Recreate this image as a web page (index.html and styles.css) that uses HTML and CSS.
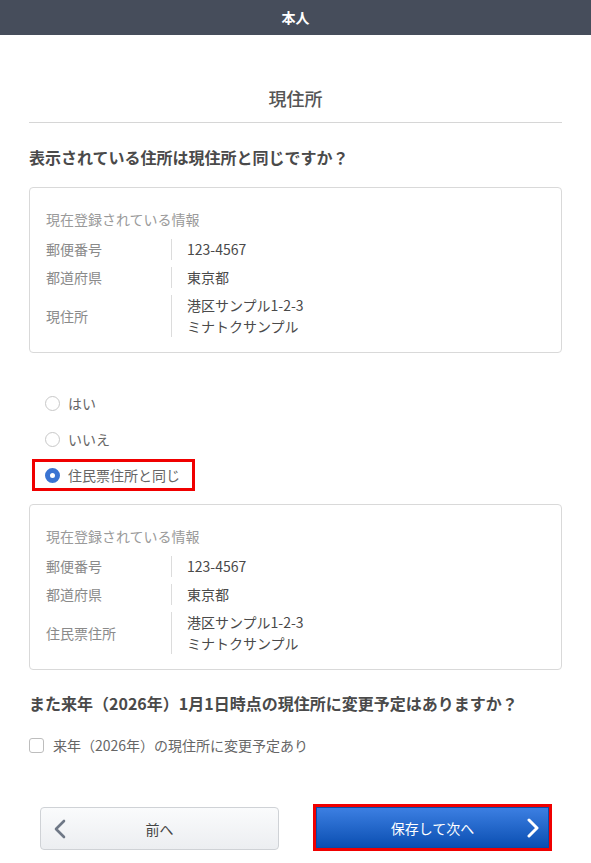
FILE: index.html
```html
<!DOCTYPE html>
<html lang="ja">
<head>
<meta charset="utf-8">
<title>現住所</title>
<link rel="stylesheet" href="styles.css">
</head>
<body>
<header class="topbar">本人</header>
<main class="main">
  <h1 class="page-title">現住所</h1>
  <h2 class="question q1">表示されている住所は現住所と同じですか？</h2>

  <section class="card">
    <div class="card-head">現在登録されている情報</div>
    <div class="row"><div class="lbl">郵便番号</div><div class="val">123-4567</div></div>
    <div class="row"><div class="lbl">都道府県</div><div class="val">東京都</div></div>
    <div class="row"><div class="lbl">現住所</div><div class="val">港区サンプル1-2-3<br>ミナトクサンプル</div></div>
  </section>

  <div class="options">
    <label class="opt"><span class="radio"></span><span class="opt-text">はい</span></label>
    <label class="opt"><span class="radio"></span><span class="opt-text">いいえ</span></label>
    <label class="opt opt-hl"><span class="radio radio-on"></span><span class="opt-text">住民票住所と同じ</span></label>
  </div>

  <section class="card card2">
    <div class="card-head">現在登録されている情報</div>
    <div class="row"><div class="lbl">郵便番号</div><div class="val">123-4567</div></div>
    <div class="row"><div class="lbl">都道府県</div><div class="val">東京都</div></div>
    <div class="row"><div class="lbl">住民票住所</div><div class="val">港区サンプル1-2-3<br>ミナトクサンプル</div></div>
  </section>

  <h2 class="question q2">また来年（2026年）1月1日時点の現住所に変更予定はありますか？</h2>
  <label class="check"><span class="box"></span><span>来年（2026年）の現住所に変更予定あり</span></label>

  <div class="buttons">
    <button class="btn btn-back">
      <svg class="chev chev-l" width="14" height="20" viewBox="0 0 14 20"><path d="M11 2 L3 10 L11 18" fill="none" stroke="#6f7886" stroke-width="2.6" stroke-linecap="round" stroke-linejoin="round"/></svg>
      <span>前へ</span>
    </button>
    <div class="next-wrap">
      <button class="btn btn-next">
        <span>保存して次へ</span>
        <svg class="chev chev-r" width="14" height="20" viewBox="0 0 14 20"><path d="M3 2 L11 10 L3 18" fill="none" stroke="#ffffff" stroke-width="3" stroke-linecap="round" stroke-linejoin="round"/></svg>
      </button>
    </div>
  </div>
</main>
</body>
</html>
```
FILE: styles.css
```css
* { box-sizing: border-box; }
html, body { margin: 0; padding: 0; background: #fff; }
body {
  font-family: "Noto Sans CJK JP", "Noto Sans", sans-serif;
  font-size: 14px;
  color: #444;
  width: 591px;
}
.topbar {
  height: 35px;
  background: #464d5b;
  color: #fff;
  font-weight: 700;
  font-size: 14px;
  line-height: 35px;
  text-align: center;
}
.main {
  padding: 51px 29px 0 29px;
}
.page-title {
  margin: 0;
  font-size: 18px;
  line-height: 24px;
  font-weight: 500;
  color: #555;
  text-align: center;
  padding-bottom: 12px;
  border-bottom: 1px solid #d6d6d6;
}
.question {
  margin: 0;
  font-size: 16px;
  line-height: 22px;
  font-weight: 700;
  color: #4a4a4a;
}
.q1 { margin-top: 23px; }
.q2 { margin-top: 22px; }
.card {
  margin-top: 19px;
  border: 1px solid #d9d9d9;
  border-radius: 4px;
  padding: 20px 16px 15px 16px;
}
.card2 { margin-top: 13px; }
.card-head {
  color: #9a9a9a;
  line-height: 22px;
  margin-bottom: 9px;
}
.row {
  display: grid;
  grid-template-columns: 125px 1fr;
  line-height: 21px;
}
.row + .row { margin-top: 7px; }
.lbl {
  color: #8a8a8a;
  display: flex;
  align-items: center;
}
.val {
  border-left: 1px solid #dcdcdc;
  padding-left: 15px;
  color: #4a4a4a;
}
.options {
  margin-top: 34px;
  display: flex;
  flex-direction: column;
  align-items: flex-start;
  gap: 4px;
  margin-left: 3px;
}
.opt {
  display: inline-flex;
  align-items: center;
  height: 32px;
  border: 3px solid transparent;
  padding: 0 12px 0 10px;
  gap: 8px;
  color: #666;
  font-size: 14px;
}
.opt-hl { border-color: #f00000; }
.radio {
  width: 15px;
  height: 15px;
  border-radius: 50%;
  border: 1px solid #c8c8c8;
  background: #fff;
  flex: none;
}
.radio-on {
  border: 5px solid #3a74d2;
}
.check {
  margin-top: 21px;
  display: flex;
  align-items: center;
  gap: 9px;
  line-height: 21px;
  color: #666;
}
.box {
  width: 15px;
  height: 15px;
  border: 1px solid #bdbdbd;
  border-radius: 3px;
  background: #fff;
  flex: none;
}
.buttons {
  margin-top: 48px;
  margin-left: 11px;
  display: grid;
  grid-template-columns: 239px 239px;
  column-gap: 34px;
  align-items: start;
}
.btn {
  font-family: inherit;
  font-size: 14px;
  position: relative;
  display: flex;
  align-items: center;
  justify-content: center;
  cursor: pointer;
  padding: 0;
}
.btn-back {
  margin-top: 3px;
  height: 43px;
  border: 1px solid #cfd2d6;
  border-radius: 4px;
  background: linear-gradient(#fafbfc, #eceef1);
  color: #444;
}
.next-wrap {
  border: 3px solid #f00000;
  height: 47px;
}
.btn-next {
  width: 100%;
  height: 100%;
  border: 1px solid #0b4aa8;
  background: linear-gradient(#3c7fe2, #0b4fb2);
  color: #fff;
}
.chev {
  position: absolute;
  top: 50%;
  margin-top: -10px;
}
.chev-l { left: 12px; }
.chev-r { right: 8px; }
```
